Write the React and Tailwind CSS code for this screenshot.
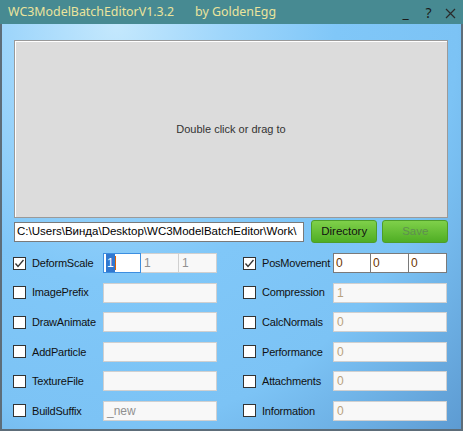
const leftRows = [
  { label: "ImagePrefix", value: "" },
  { label: "DrawAnimate", value: "" },
  { label: "AddParticle", value: "" },
  { label: "TextureFile", value: "" },
  { label: "BuildSuffix", value: "_new" },
]

const rightRows = [
  { label: "Compression", value: "1" },
  { label: "CalcNormals", value: "0" },
  { label: "Performance", value: "0" },
  { label: "Attachments", value: "0" },
  { label: "Information", value: "0" },
]

function Check({ checked }) {
  return (
    <div className="w-[13px] h-[13px] shrink-0 border border-[#333] bg-white flex items-center justify-center">
      {checked && (
        <svg width="11" height="11" viewBox="0 0 11 11">
          <path d="M1.5 5.5 L4 8.5 L9.5 2" fill="none" stroke="#333" strokeWidth="1.3" />
        </svg>
      )}
    </div>
  )
}

function Row({ label, checked, children }) {
  return (
    <div className="flex items-center h-[20px]">
      <Check checked={checked} />
      <span className="ml-[6px] w-[71px] text-[11px] text-[#111] tracking-[-0.2px] whitespace-nowrap">{label}</span>
      {children}
    </div>
  )
}

function Field({ value, muted }) {
  return (
    <div className="w-[114px] h-[20px] bg-[#f8f8f8] border border-[#d0d0d0] flex items-center px-[3px] text-[12px]">
      <span className={muted ? "text-[#b9a27c]" : "text-[#909090]"}>{value}</span>
    </div>
  )
}

export default function App() {
  return (
    <div
      className="w-[463px] h-[431px] flex flex-col overflow-hidden"
      style={{ fontFamily: '"Liberation Sans", Arial, sans-serif' }}
    >
      {/* Title bar */}
      <div className="h-[24px] shrink-0 bg-[#478a92] flex items-center pl-[8px] text-[#ebe49c] text-[12.4px]" style={{ fontFamily: '"Noto Sans", sans-serif' }}>
        <span>WC3ModelBatchEditorV1.3.2</span>
        <span className="ml-[21px]">by GoldenEgg</span>
        <div className="ml-auto flex items-center text-[#1a1a1a] text-[14px]">
          <span className="w-[23px] text-center">_</span>
          <span className="w-[23px] text-center">?</span>
          <span className="w-[23px] text-center pr-[2px]">
            <svg width="11" height="11" viewBox="0 0 11 11" className="inline">
              <path d="M1 1 L10 10 M10 1 L1 10" stroke="#2a2a2a" strokeWidth="1.2" />
            </svg>
          </span>
        </div>
      </div>

      {/* Body */}
      <div className="flex-1 border-l-2 border-r-2 border-b-2 border-[#5d6d79] bg-[radial-gradient(ellipse_at_25%_0%,#c4e8fd_0%,#9fd6fb_22%,#80c7f8_45%,#7cc3f5_70%,#5d9bd2_100%)] pt-[16px] pl-[12px] pr-[13px]">
        {/* Drop panel */}
        <div className="h-[178px] w-[434px] border border-[#9a9a9a] bg-[#dcdcdc] shadow-[inset_1px_1px_0_#fff] flex items-center justify-center text-[11px] text-[#333]">
          Double click or drag to
        </div>

        {/* Path row */}
        <div className="flex items-center mt-[2px] h-[23px]">
          <div className="w-[292px] h-[20px] bg-white border border-[#7a7a7a] flex items-center px-[2px] text-[11.5px] text-black whitespace-nowrap overflow-hidden">
            C:\Users\Винда\Desktop\WC3ModelBatchEditor\Work\
          </div>
          <button className="ml-[7px] w-[67px] h-[23px] rounded-[3px] bg-[linear-gradient(#7fd04a,#4fae24)] border border-[#4e9d2a] text-[11.5px] text-[#111]">
            Directory
          </button>
          <button className="ml-[5px] w-[66px] h-[23px] rounded-[3px] bg-[linear-gradient(#7fd04a,#4fae24)] border border-[#4e9d2a] text-[11.5px] text-[#5f8f50]">
            Save
          </button>
        </div>

        {/* Options */}
        <div className="grid grid-cols-[230px_230px] gap-y-[9.6px] mt-[10px] -ml-[1px]">
          <Row label="DeformScale" checked>
            <div className="flex">
              <div className="w-[38px] h-[20px] bg-white border border-[#3c8ee0] flex items-center px-[2px] text-[12px]">
                <span className="bg-[#3178d0] text-white px-[1px]">1</span>
                <span className="w-px h-[14px] bg-[#e06000]" />
              </div>
              <div className="w-[38px] h-[20px] bg-[#f8f8f8] border border-[#d0d0d0] border-l-0 flex items-center px-[3px] text-[12px] text-[#909090]">1</div>
              <div className="w-[38px] h-[20px] bg-[#f8f8f8] border border-[#d0d0d0] border-l-0 flex items-center px-[3px] text-[12px] text-[#909090]">1</div>
            </div>
          </Row>
          <Row label="PosMovement" checked>
            <div className="flex">
              {[0, 1, 2].map((i) => (
                <div
                  key={i}
                  className={`w-[38px] h-[20px] bg-white border border-[#7a7a7a] flex items-center px-[2px] text-[12px] text-[#6b3600] ${i > 0 ? "border-l-0" : ""}`}
                >
                  0
                </div>
              ))}
            </div>
          </Row>
          {leftRows.map((l, i) => (
            <div key={l.label} className="contents">
              <Row label={l.label}>
                <Field value={l.value} />
              </Row>
              <Row label={rightRows[i].label}>
                <Field value={rightRows[i].value} muted />
              </Row>
            </div>
          ))}
        </div>
      </div>
    </div>
  )
}
